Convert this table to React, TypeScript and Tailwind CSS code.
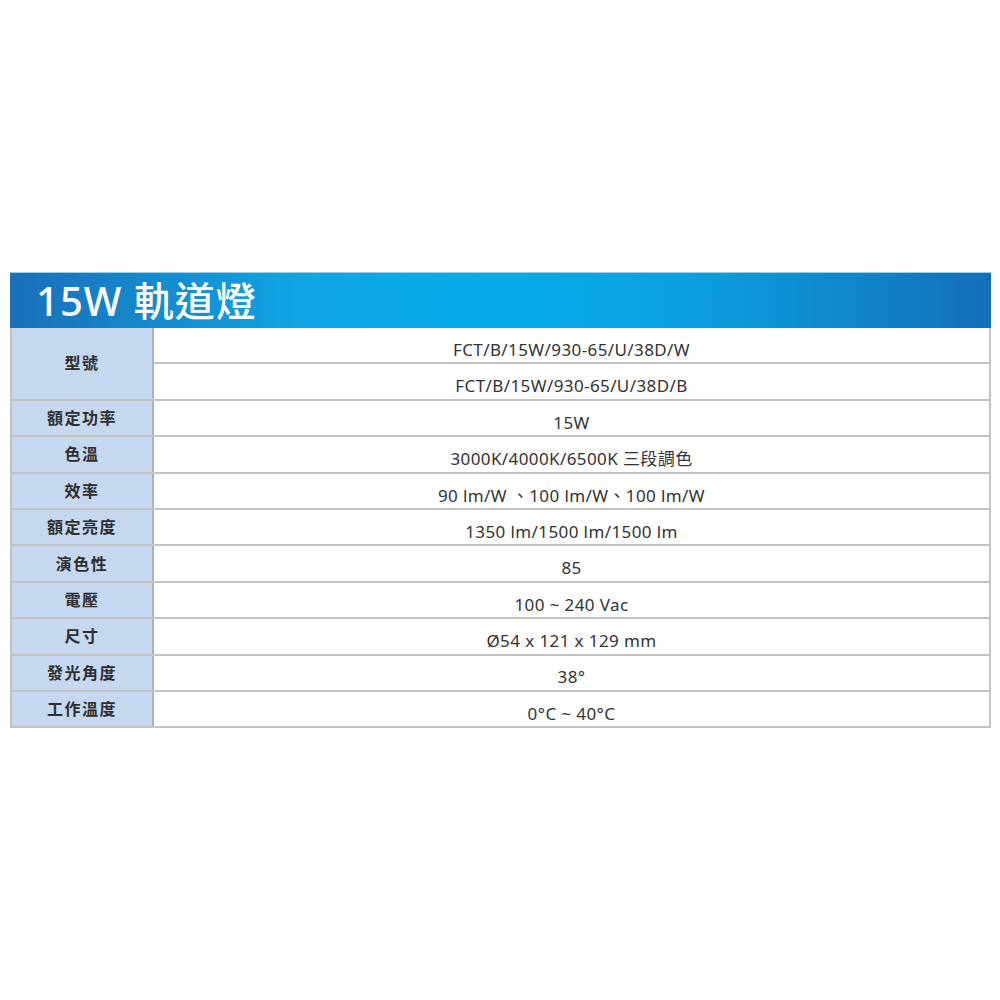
const FONT = '"Noto Sans", "Noto Sans CJK TC", sans-serif';

const rows: { label: string; values: string[] }[] = [
  { label: '型號', values: ['FCT/B/15W/930-65/U/38D/W', 'FCT/B/15W/930-65/U/38D/B'] },
  { label: '額定功率', values: ['15W'] },
  { label: '色溫', values: ['3000K/4000K/6500K 三段調色'] },
  { label: '效率', values: ['90 lm/W 、100 lm/W、100 lm/W'] },
  { label: '額定亮度', values: ['1350 lm/1500 lm/1500 lm'] },
  { label: '演色性', values: ['85'] },
  { label: '電壓', values: ['100 ~ 240 Vac'] },
  { label: '尺寸', values: ['Ø54 x 121 x 129 mm'] },
  { label: '發光角度', values: ['38°'] },
  { label: '工作溫度', values: ['0°C ~ 40°C'] },
];

export default function App() {
  return (
    <div className="w-[1000px] h-[1000px] bg-white pt-[272px] pl-[10px]" style={{ fontFamily: FONT }}>
      <div className="w-[981px]">
        {/* header */}
        <div className="h-[56px] flex items-center pl-[26px] border-t border-[#8fd3f0] bg-[linear-gradient(to_right,#1a6fb8_0%,#0fa6e4_30%,#05acea_50%,#0b9fdf_70%,#146fb9_100%)]">
          <span className="text-white text-[40px] font-medium tracking-[1px] leading-none">15W 軌道燈</span>
        </div>

        {/* body */}
        <div className="border-l-2 border-r-2 border-[#c3c3c3]">
          {rows.map((row) => (
            <div key={row.label} className="flex border-b-2 border-[#c3c3c3]">
              <div className="w-[142px] shrink-0 bg-[#c6d8ef] border-r-2 border-[#a8b3c0] flex items-center justify-center text-[16px] font-bold tracking-[1.5px] text-[#2e2e2e]">
                {row.label}
              </div>
              <div className="flex-1 flex flex-col">
                {row.values.map((v, i) => (
                  <div
                    key={v}
                    className={
                      'flex items-center justify-center pt-[9px] text-[17px] text-[#333] tracking-[0.4px] ' +
                      (i < row.values.length - 1 ? 'h-[36.4px] border-b-2 border-[#c3c3c3]' : 'h-[34.4px]')
                    }
                  >
                    {v}
                  </div>
                ))}
              </div>
            </div>
          ))}
        </div>
      </div>
    </div>
  );
}
